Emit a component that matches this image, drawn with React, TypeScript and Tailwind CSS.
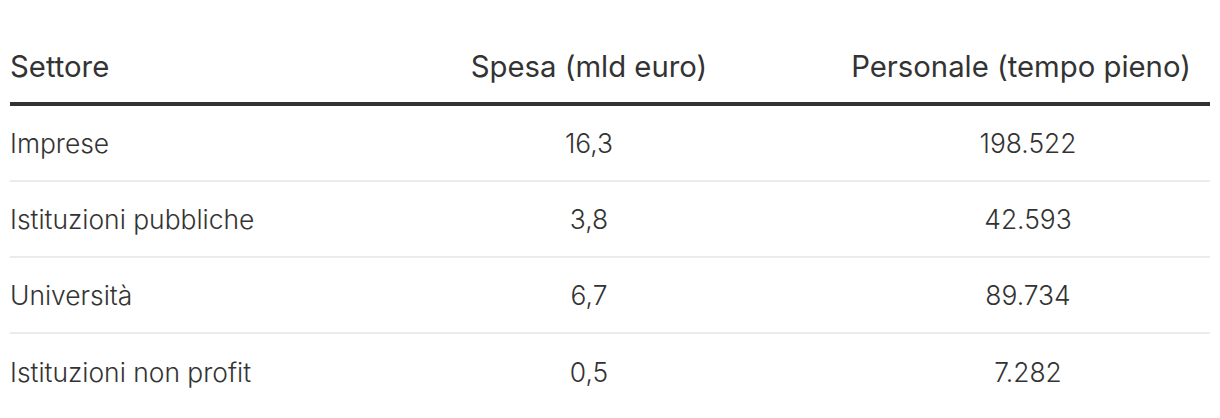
import React from "react";

const rows = [
  ["Imprese", "16,3", "198.522"],
  ["Istituzioni pubbliche", "3,8", "42.593"],
  ["Università", "6,7", "89.734"],
  ["Istituzioni non profit", "0,5", "7.282"],
];

export default function App() {
  return (
    <div
      className="bg-white w-[1220px] h-[418px] px-[10px] pt-[31px] text-[#333333]"
      style={{ fontFamily: "Inter, 'Noto Sans', sans-serif" }}
    >
      <div className="grid grid-cols-[322px_514px_364px] h-[75px] items-center border-b-4 border-[#333333] text-[29.3px] font-normal leading-normal">
        <div>Settore</div>
        <div className="text-center">Spesa (mld euro)</div>
        <div className="text-center pr-[14px]">Personale (tempo pieno)</div>
      </div>
      {rows.map((r, i) => (
        <div
          key={i}
          className={`grid grid-cols-[322px_514px_364px] h-[76px] items-center pt-[1px] text-[26.4px] font-light leading-normal ${
            i < rows.length - 1 ? "border-b-2 border-[#ebebeb]" : ""
          }`}
        >
          <div>{r[0]}</div>
          <div className="text-center">{r[1]}</div>
          <div className="text-center">{r[2]}</div>
        </div>
      ))}
    </div>
  );
}
